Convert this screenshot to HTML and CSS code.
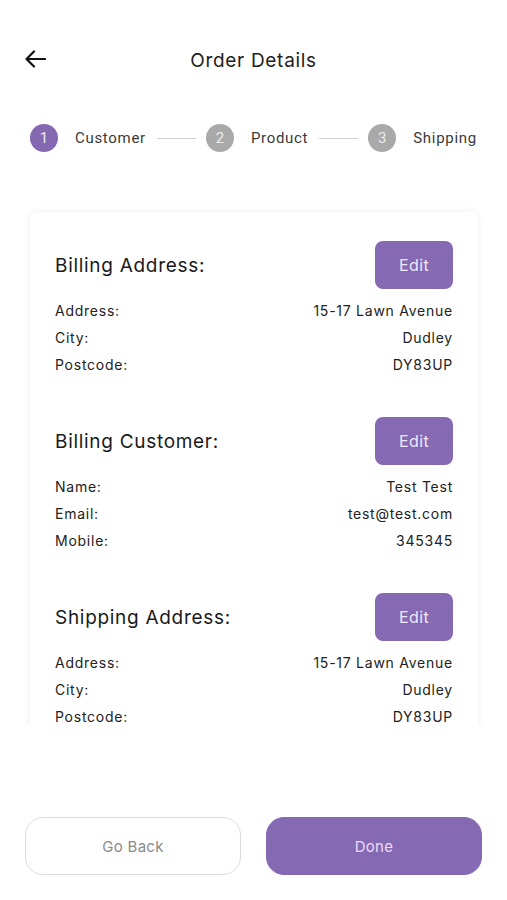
FILE: index.html
```html
<!DOCTYPE html>
<html>
<head>
<meta charset="utf-8">
<link rel="stylesheet" href="styles.css">
</head>
<body>
<div class="screen">
  <header class="topbar">
    <button class="back" aria-label="Back">
      <svg width="22" height="18" viewBox="0 0 22 18"><path d="M10 1.5 2.5 9 10 16.5M2.5 9H21" fill="none" stroke="#111" stroke-width="2.2" stroke-linecap="round" stroke-linejoin="round"/></svg>
    </button>
    <h1 class="title">Order Details</h1>
  </header>

  <nav class="stepper">
    <div class="step active"><span class="dot">1</span><span class="label">Customer</span></div>
    <span class="line"></span>
    <div class="step"><span class="dot">2</span><span class="label">Product</span></div>
    <span class="line"></span>
    <div class="step"><span class="dot">3</span><span class="label">Shipping</span></div>
  </nav>

  <div class="scroll">
    <div class="card">
      <section class="block">
        <div class="block-head"><h2>Billing Address:</h2><button class="edit">Edit</button></div>
        <div class="row"><span>Address:</span><span>15-17 Lawn Avenue</span></div>
        <div class="row"><span>City:</span><span>Dudley</span></div>
        <div class="row"><span>Postcode:</span><span>DY83UP</span></div>
      </section>
      <section class="block">
        <div class="block-head"><h2>Billing Customer:</h2><button class="edit">Edit</button></div>
        <div class="row"><span>Name:</span><span>Test Test</span></div>
        <div class="row"><span>Email:</span><span>test@test.com</span></div>
        <div class="row"><span>Mobile:</span><span>345345</span></div>
      </section>
      <section class="block">
        <div class="block-head"><h2>Shipping Address:</h2><button class="edit">Edit</button></div>
        <div class="row"><span>Address:</span><span>15-17 Lawn Avenue</span></div>
        <div class="row"><span>City:</span><span>Dudley</span></div>
        <div class="row"><span>Postcode:</span><span>DY83UP</span></div>
      </section>
    </div>
  </div>

  <footer class="actions">
    <button class="btn ghost">Go Back</button>
    <button class="btn primary">Done</button>
  </footer>
</div>
</body>
</html>
```

FILE: styles.css
```css
* { box-sizing: border-box; }
html, body { margin: 0; padding: 0; background: #fff; }
body { font-family: "Inter", "Noto Sans", sans-serif; color: #1f1f1f; }
.screen { width: 507px; height: 900px; display: flex; flex-direction: column; overflow: hidden; }

.topbar { height: 121px; padding-top: 41px; position: relative; display: flex; justify-content: center; }
.back { position: absolute; left: 24px; top: 50px; border: 0; background: none; padding: 0; width: 24px; height: 20px; display: flex; }
.title { margin: 0; font-size: 19px; font-weight: 400; line-height: 40px; height: 40px; color: #222; letter-spacing: 0.7px; }

.stepper { height: 34px; display: flex; align-items: center; padding-left: 30px; font-family: "Roboto", sans-serif; }
.step { display: flex; align-items: center; }
.dot { width: 28px; height: 28px; border-radius: 50%; background: #a9a9a9; color: #ededed; font-size: 15px; display: flex; align-items: center; justify-content: center; }
.step.active .dot { background: #8568b2; }
.label { margin-left: 17px; font-size: 15px; color: #3a3a3a; letter-spacing: 0.7px; }
.line { width: 39px; height: 1px; background: #cfcfcf; margin: 0 10px 0 11px; }

.scroll { height: 570px; overflow: hidden; padding: 57px 29px 0 30px; }
.card { background: #fff; border-radius: 8px; box-shadow: 0 0 8px rgba(0,0,0,0.07); padding: 29px 25px 40px; }
.block + .block { margin-top: 39px; }
.block-head { display: flex; justify-content: space-between; align-items: center; height: 48px; margin-bottom: 8px; }
.block-head h2 { margin: 0; font-size: 19px; font-weight: 400; color: #1a1a1a; letter-spacing: 0.7px; }
.edit { width: 78px; height: 48px; border: 0; border-radius: 8px; background: #8669b3; color: #efe6fa; font-family: inherit; font-size: 16px; letter-spacing: 0.4px; }
.row { display: flex; justify-content: space-between; height: 27px; line-height: 27px; font-size: 14px; color: #222; letter-spacing: 0.75px; }

.actions { display: flex; gap: 25px; padding: 92px 25px 0 25px; }
.btn { width: 216px; height: 58px; border-radius: 18px; font-family: inherit; font-size: 15px; letter-spacing: 0.3px; }
.ghost { background: #fff; border: 1px solid #dcdcdc; color: #8a8a8a; }
.primary { background: #8669b3; border: 1px solid #8669b3; color: #eadcf7; }
```
